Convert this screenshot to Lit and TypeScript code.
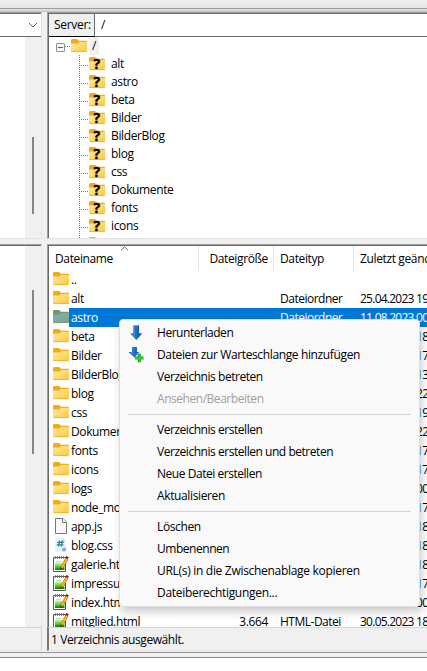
import { LitElement, html, svg, css, nothing } from "lit";
import { customElement, property } from "lit/decorators.js";
import { classMap } from "lit/directives/class-map.js";

const folderShape = svg`
  <defs><linearGradient id="f" x1="0" y1="0" x2="1" y2="1"><stop offset="0" stop-color="#ffe9a3"/><stop offset="1" stop-color="#fdc93c"/></linearGradient></defs>
  <path d="M0 2.5Q0 1 1 1H6L8 2.8H15Q16 2.8 16 4V7H0Z" fill="#f2ac11"/>
  <path d="M0 5.5H6.5L8 4H16V13Q16 14 15 14H1Q0 14 0 13Z" fill="url(#f)"/>
  <path d="M.5 13.6H15.5" stroke="#e9ae2e" stroke-width=".8"/>`;

@customElement("file-icon")
export class FileIcon extends LitElement {
  @property() kind = "folder";
  static styles = css`
    :host { display: block; width: 16px; height: 16px; flex: none; }
    svg { display: block; overflow: visible; }
    .mark { font: 700 14px "Open Sans", "Noto Sans", sans-serif; fill: #000; stroke: #000; stroke-width: .4px; }
  `;
  render() {
    return html`<svg width="16" height="16" viewBox="0 0 16 16">${this.shape()}</svg>`;
  }
  private shape() {
    switch (this.kind) {
      case "unknown":
        return svg`${folderShape}<text class="mark" x="4.6" y="13">?</text>`;
      case "selected":
        return svg`<defs><linearGradient id="s" x1="0" y1="0" x2="1" y2="1"><stop offset="0" stop-color="#80afbd"/><stop offset="1" stop-color="#7fa38c"/></linearGradient></defs>
          <path d="M0 2.5Q0 1 1 1H6L8 2.8H15Q16 2.8 16 4V7H0Z" fill="#799468"/>
          <path d="M0 5.5H6.5L8 4H16V13Q16 14 15 14H1Q0 14 0 13Z" fill="url(#s)"/>
          <path d="M.5 13.6H15.5" stroke="#75956f" stroke-width=".8"/>`;
      case "file":
        return svg`<path d="M2.5 .5H10L13.5 4V15.5H2.5Z" fill="#fafafa" stroke="#777"/><path d="M9.5 .5V4.5H13.5" fill="#fff" stroke="#777"/>`;
      case "css":
        return svg`<path d="M2 1H10L13 4V15H2Z" fill="#edf1f6"/><path d="M10 1V4H13Z" fill="#d1d9e2"/>
          <path d="M6.7 3.5L5.5 9.5M9.5 3.5L8.3 9.5M4.2 5.4H10.8M3.8 7.8H10.4" stroke="#35809f" stroke-width="1.3" fill="none"/>
          <circle cx="11" cy="12.5" r="2.1" fill="#83aeea"/>`;
      case "html":
        return svg`<defs><linearGradient id="g" x1="0" y1="0" x2="0" y2="1"><stop offset="0" stop-color="#c9f1a0"/><stop offset=".5" stop-color="#5ad22c"/><stop offset="1" stop-color="#16710f"/></linearGradient></defs>
          <path d="M.5 1.5H12.5V15.5H.5Z" fill="#fff" stroke="#555"/>
          <path d="M2.5 0V3M4.5 0V3M6.5 0V3M8.5 0V3M10.5 0V3" stroke="#777" stroke-width=".9"/>
          <path d="M3 5.5H8M3 7H8" stroke="#b9dba0" stroke-width=".8"/>
          <rect x="2" y="7" width="9.5" height="7" fill="url(#g)"/>
          <path d="M14 2.5L8.6 12" stroke="#8b5a12" stroke-width="3"/>
          <path d="M14 2.5L8.8 11.6" stroke="#f9b824" stroke-width="2.2"/>
          <path d="M13.6 2.4L14.6 .6" stroke="#8b1111" stroke-width="2.8"/>
          <path d="M7.3 14L7.7 11.4L9.6 12.4Z" fill="#333"/>`;
      default:
        return folderShape;
    }
  }
}

interface Entry { name: string; kind: string; type?: string; size?: string; date?: string; selected?: boolean }
const dir = (name: string, date: string): Entry => ({ name, kind: "folder", type: "Dateiordner", date });
const page = (name: string, size: string, date: string): Entry => ({ name, kind: "html", type: "HTML-Datei", size, date });

const entries: Entry[] = [
  { name: "..", kind: "folder" },
  dir("alt", "25.04.2023 19"),
  { name: "astro", kind: "selected", type: "Dateiordner", date: "11.08.2023 00", selected: true },
  dir("beta", "25.04.2023 18"),
  dir("Bilder", "25.04.2023 17"),
  dir("BilderBlog", "25.04.2023 13"),
  dir("blog", "25.04.2023 22"),
  dir("css", "25.04.2023 19"),
  dir("Dokumente", "25.04.2023 22"),
  dir("fonts", "25.04.2023 17"),
  dir("icons", "25.04.2023 17"),
  dir("logs", "25.04.2023 00"),
  dir("node_modules", "25.04.2023 17"),
  { name: "app.js", kind: "file", type: "JS-Datei", date: "25.04.2023 18" },
  { name: "blog.css", kind: "css", type: "CSS-Datei", date: "25.04.2023 18" },
  page("galerie.html", "", "30.05.2023 18"),
  page("impressum.html", "", "30.05.2023 17"),
  page("index.html", "", "30.05.2023 00"),
  page("mitglied.html", "3.664", "30.05.2023 18"),
];

const tree = ["alt", "astro", "beta", "Bilder", "BilderBlog", "blog", "css", "Dokumente", "fonts", "icons", "logs"];

interface MenuItem { label: string; icon?: string; disabled?: boolean; fit?: "tight" | "loose" }
const menu: MenuItem[][] = [
  [
    { label: "Herunterladen", icon: "down", fit: "tight" },
    { label: "Dateien zur Warteschlange hinzufügen", icon: "queue" },
    { label: "Verzeichnis betreten", fit: "tight" },
    { label: "Ansehen/Bearbeiten", disabled: true, fit: "tight" },
  ],
  [
    { label: "Verzeichnis erstellen", fit: "tight" },
    { label: "Verzeichnis erstellen und betreten", fit: "tight" },
    { label: "Neue Datei erstellen", fit: "tight" },
    { label: "Aktualisieren" },
  ],
  [
    { label: "Löschen" },
    { label: "Umbenennen", fit: "tight" },
    { label: "URL(s) in die Zwischenablage kopieren", fit: "loose" },
    { label: "Dateiberechtigungen...", fit: "loose" },
  ],
];

@customElement("context-menu")
export class ContextMenu extends LitElement {
  static styles = css`
    :host { display: block; box-sizing: border-box; width: 301px; height: 288px; padding: 2px 8px 0; background: #f9f9f9; border: 1px solid #dedede; border-radius: 4px; box-shadow: 2px 5px 8px rgba(0,0,0,.2); }
    .item { display: flex; align-items: center; height: 22px; }
    .tight { letter-spacing: -.46px; }
    .loose { letter-spacing: -.3px; }
    .icon { width: 29px; height: 18px; flex: none; }
    .icon svg { display: block; }
    .disabled { color: #a0a0a0; }
    .group + .group { margin-top: 4px; padding-top: 4px; border-top: 1px solid #d5d5d5; }
  `;
  private icon(kind?: string) {
    if (kind === "down")
      return html`<svg width="18" height="18" viewBox="0 0 18 18"><path d="M5.5 1.5H11V9.5H14L8.3 16L2.5 9.5H5.5Z" fill="#1f6fcd"/><path d="M5.5 1.5H7V14.2L2.5 9.5H5.5Z" fill="#3d86d6"/><path d="M9.5 1.5H11V9.5H14L9.5 14.5Z" fill="#155bab"/></svg>`;
    if (kind === "queue")
      return html`<svg width="18" height="18" viewBox="0 0 18 18"><path d="M4 1H9V6H11.5L6.5 11.5L.5 6H4Z" fill="#1f6bc4"/><path d="M4 1H5.5V9.8L.5 6H4Z" fill="#3a80cc"/><path d="M11.3 7.8V16.2M7.1 12H15.5" stroke="#1ba51d" stroke-width="3.2"/><path d="M11.3 8.6V15.4M7.9 12H14.7" stroke="#39ca32" stroke-width="1.5"/></svg>`;
    return nothing;
  }
  render() {
    return menu.map(group => html`<div class="group">${group.map(i => html`
      <div class=${classMap({ item: true, disabled: !!i.disabled, tight: i.fit === "tight", loose: i.fit === "loose" })}><span class="icon">${this.icon(i.icon)}</span>${i.label}</div>`)}</div>`);
  }
}

@customElement("app-root")
export class AppRoot extends LitElement {
  static styles = css`
    * { box-sizing: border-box; }
    :host { display: flex; flex-direction: column; position: relative; width: 427px; height: 671px; overflow: hidden; background: #fff; color: #000; font: 12px/18px "Open Sans", "Noto Sans", sans-serif; letter-spacing: -.37px; white-space: nowrap; }
    .toolbar { height: 12px; flex: none; background: linear-gradient(#eee, #e6e6e6 8px, #a0a0a0 8px, #a0a0a0 9px, #dcdcdc 9px, #dcdcdc 11px, #c4c4c4 11px); }
    .body { display: flex; height: 640px; flex: none; background: #f0f0f0; }
    .local { display: flex; flex-direction: column; width: 42px; flex: none; }
    .remote { display: flex; flex-direction: column; width: 380px; flex: none; margin-left: 5px; }
    .pane { background: #fff; border-top: 1px solid #a0a0a0; border-bottom: 1px solid #e3e3e3; overflow: hidden; box-shadow: inset 0 1px #696969; padding-top: 1px; flex: none; }
    .local .pane { border-right: 1px solid #e3e3e3; }
    .remote .pane { border-left: 1px solid #a0a0a0; box-shadow: inset 1px 1px #696969; padding-left: 1px; }
    .upper { height: 227px; margin-bottom: 5px; }
    .lower { height: 383px; }
    .lower.pane { border-bottom: 0; }
    .combo { height: 23px; border-bottom: 1px solid #696969; display: flex; justify-content: flex-end; align-items: center; padding-right: 3px; }
    .track { width: 16px; margin-left: auto; background: #f0f0f0; height: 100%; display: flex; justify-content: center; }
    .thumb { width: 2px; margin-right: 1px; background: #858585; }
    .upper .thumb { height: 77px; margin-top: 100px; }
    .lower .thumb { height: 164px; margin-top: 44px; }
    .address { display: flex; height: 23px; border-bottom: 1px solid #696969; line-height: 22px; letter-spacing: -.3px; }
    .address .label { width: 46px; height: 23px; padding-left: 5px; background: #f0f0f0; border-right: 1px solid #696969; border-bottom: 1px solid #000; }
    .address .path { padding-left: 6px; }
    .tree { padding-left: 7px; }
    .root { display: flex; align-items: center; height: 18px; }
    .root .sign { width: 9px; height: 9px; margin-top: 2px; border: 1px solid #919191; border-radius: 1px; background: linear-gradient(#475fa6,#475fa6) center/5px 1px no-repeat #f8f8f8; }
    .dots { width: 6px; height: 1px; background: repeating-linear-gradient(90deg, #808080 0 1px, transparent 1px 2px); }
    .root file-icon { margin-right: 3px; }
    .root .name { background: #f0f0f0; width: 9px; padding-left: 2px; height: 18px; }
    .children { margin-left: 23px; background: repeating-linear-gradient(#808080 0 1px, transparent 1px 2px) 0 0/1px 100% no-repeat; }
    .child { display: flex; align-items: center; height: 18px; }
    .child .dots { width: 10px; margin-top: 2px; }
    .child file-icon { margin-right: 6px; }
    .grid { display: grid; grid-template-columns: 150px 75px 80px 80px; }
    .head { height: 24px; line-height: 25px; position: relative; }
    .head > span { padding-left: 6px; border-right: 1px solid #e3e3e3; }
    .head .size { padding: 0 5px 0 0; text-align: right; }
    .arrow { position: absolute; left: 71px; top: 0; }
    .row { height: 19px; line-height: 20px; }
    .row > span { padding-left: 6px; }
    .row .size { padding: 0 6px 0 0; text-align: right; }
    .row .type { letter-spacing: -.5px; }
    .row .date { letter-spacing: -.75px; }
    .row .first { display: flex; padding-left: 4px; }
    .row .first file-icon { margin-top: 1px; }
    .row .first b { font-weight: 400; flex: 1; padding-left: 2px; }
    .sel { background: linear-gradient(#0078d7, #0078d7) 20px 0 no-repeat; color: #fff; }
    .status { height: 24px; line-height: 24px; flex: none; border-top: 1px solid #d5d5d5; border-bottom: 1px solid #e3e3e3; letter-spacing: -.41px; }
    .local .status { border-right: 1px solid #d0d0d0; width: 42px; }
    .remote .status { border-left: 2px solid #777; padding-left: 2px; }
    .edge { height: 6px; flex: none; background: #f0f0f0; border-top: 1px solid #969696; border-bottom: 1px solid #858585; }
    context-menu { position: absolute; left: 119px; top: 319px; }
  `;
  render() {
    return html`
      <div class="toolbar"></div>
      <div class="body">
        <div class="local">
          <div class="pane upper">
            <div class="combo"><svg width="10" height="6" viewBox="0 0 10 6"><path d="M1 1L5 5L9 1" fill="none" stroke="#666"/></svg></div>
            <div class="track"><div class="thumb"></div></div>
          </div>
          <div class="pane lower"><div class="track"><div class="thumb"></div></div></div>
          <div class="status"></div>
        </div>
        <div class="remote">
          <div class="pane upper">
            <div class="address"><span class="label">Server:</span><span class="path">/</span></div>
            <div class="tree">
              <div class="root"><span class="sign"></span><span class="dots"></span><file-icon></file-icon><span class="name">/</span></div>
              <div class="children">${tree.map(n => html`<div class="child"><span class="dots"></span><file-icon kind="unknown"></file-icon>${n}</div>`)}</div>
            </div>
          </div>
          <div class="pane lower">
            <div class="grid head">
              <span>Dateiname</span><span class="size">Dateigröße</span><span>Dateityp</span><span>Zuletzt geändert</span>
              <svg class="arrow" width="9" height="5" viewBox="0 0 9 5"><path d="M.8 4.4L4.5 .8L8.2 4.4" fill="none" stroke="#666"/></svg>
            </div>
            ${entries.map(e => html`<div class=${classMap({ grid: true, row: true, sel: !!e.selected })}>
              <span class="first"><file-icon kind=${e.kind}></file-icon><b>${e.name}</b></span>
              <span class="size">${e.size ?? ""}</span><span class="type">${e.type ?? ""}</span><span class="date">${e.date ?? ""}</span></div>`)}
          </div>
          <div class="status">1 Verzeichnis ausgewählt.</div>
        </div>
      </div>
      <div class="edge"></div>
      <context-menu></context-menu>`;
  }
}
